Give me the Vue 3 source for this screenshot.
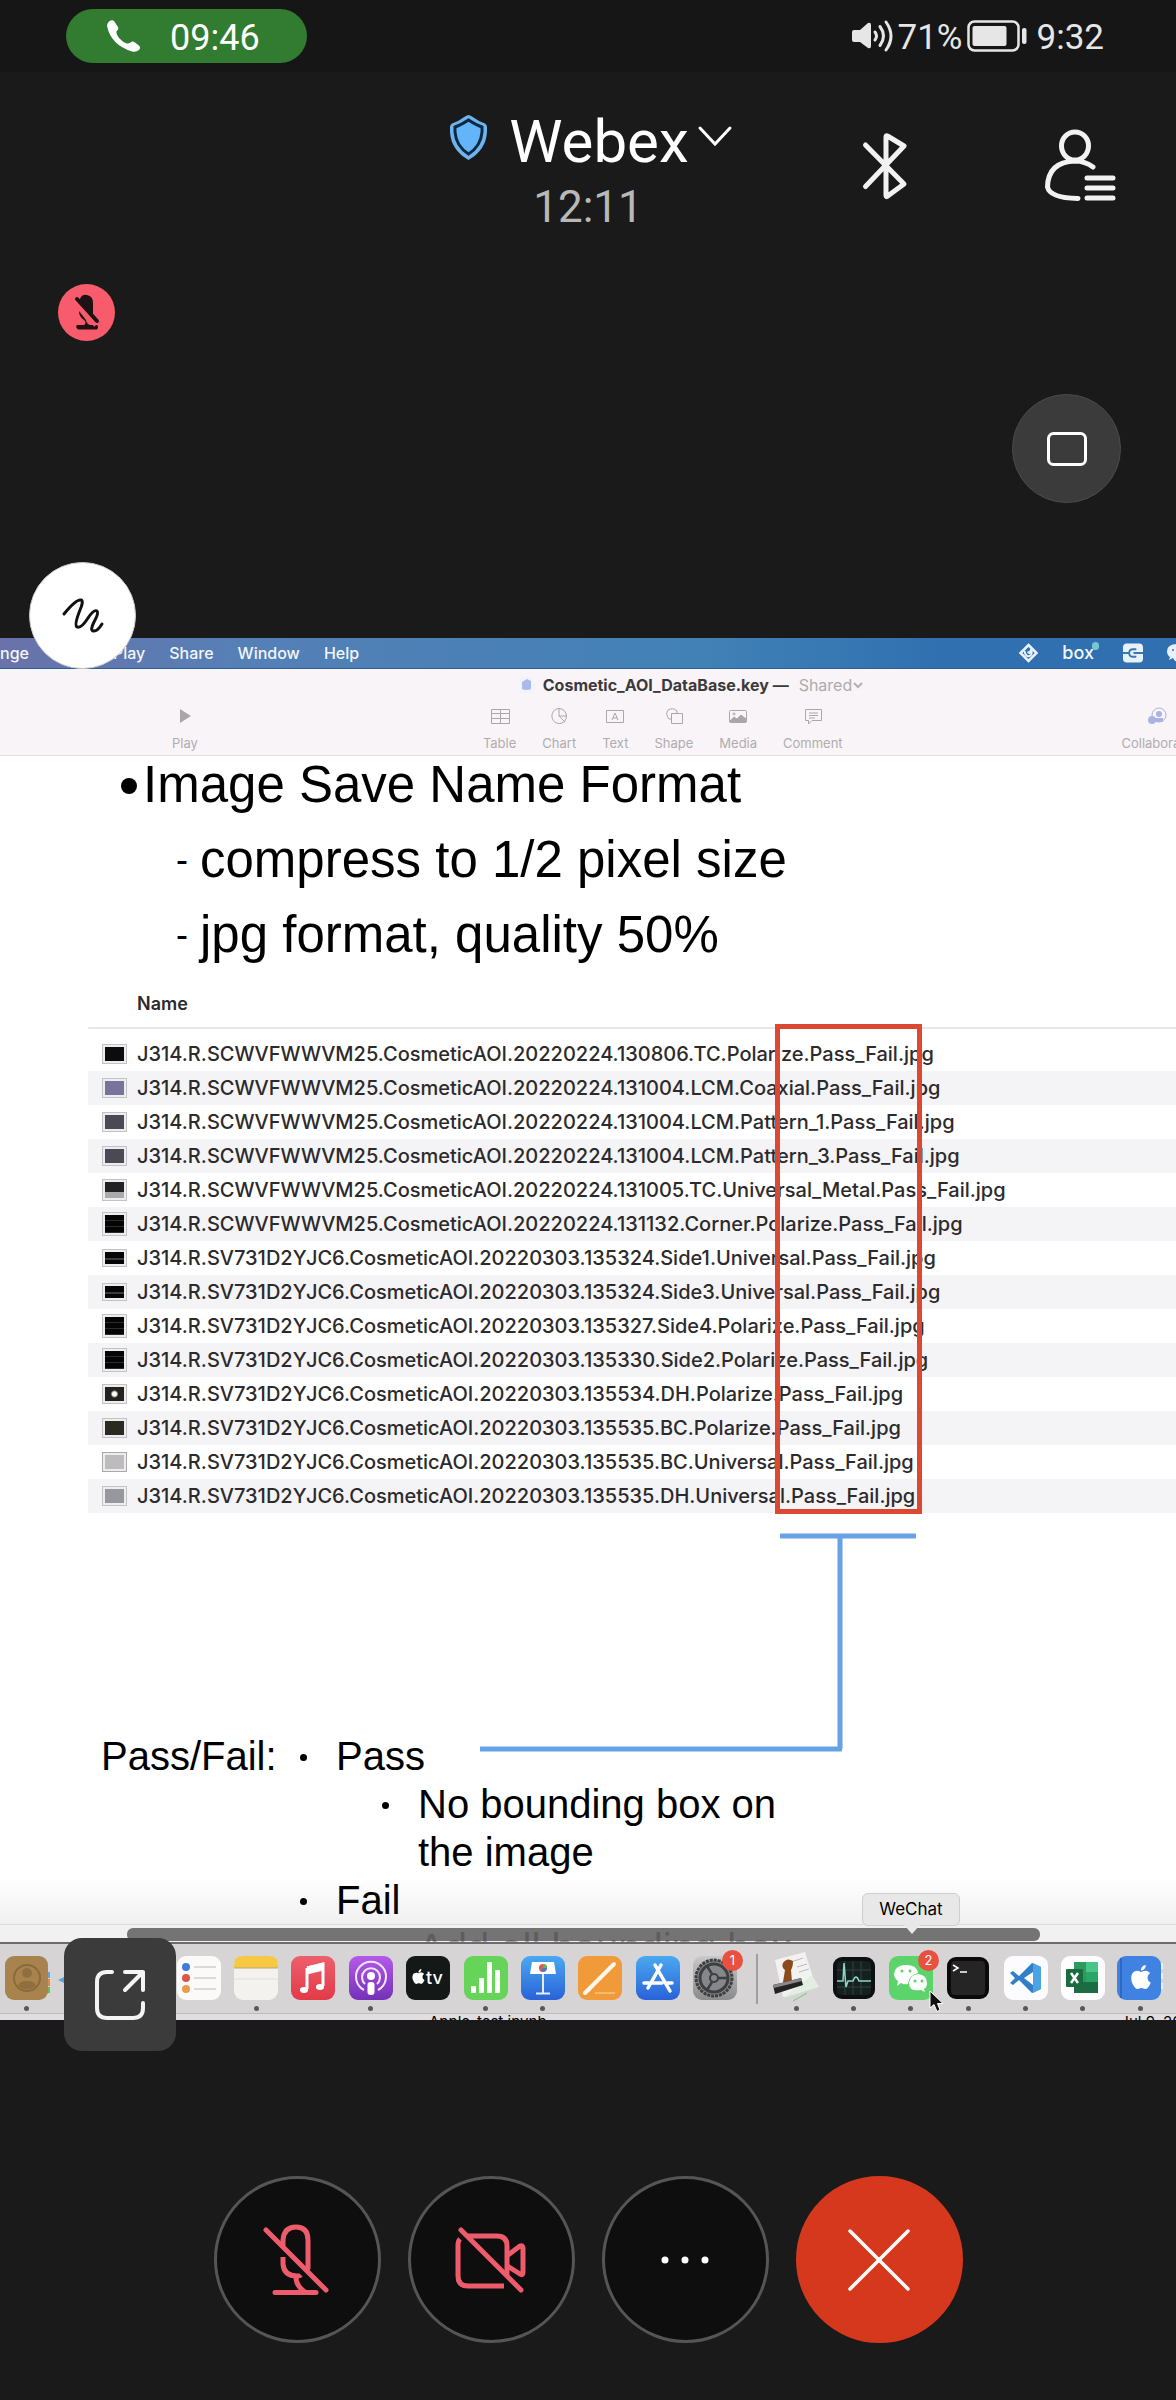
<script setup>
const menus = ['Share', 'Window', 'Help']

const tools = ['Table', 'Chart', 'Text', 'Shape', 'Media', 'Comment']

const files = [
  { name: 'J314.R.SCWVFWWVM25.CosmeticAOI.20220224.130806.TC.Polarize.Pass_Fail.jpg', thumb: 'black' },
  { name: 'J314.R.SCWVFWWVM25.CosmeticAOI.20220224.131004.LCM.Coaxial.Pass_Fail.jpg', thumb: 'violet' },
  { name: 'J314.R.SCWVFWWVM25.CosmeticAOI.20220224.131004.LCM.Pattern_1.Pass_Fail.jpg', thumb: 'slate' },
  { name: 'J314.R.SCWVFWWVM25.CosmeticAOI.20220224.131004.LCM.Pattern_3.Pass_Fail.jpg', thumb: 'slate' },
  { name: 'J314.R.SCWVFWWVM25.CosmeticAOI.20220224.131005.TC.Universal_Metal.Pass_Fail.jpg', thumb: 'metal' },
  { name: 'J314.R.SCWVFWWVM25.CosmeticAOI.20220224.131132.Corner.Polarize.Pass_Fail.jpg', thumb: 'corner' },
  { name: 'J314.R.SV731D2YJC6.CosmeticAOI.20220303.135324.Side1.Universal.Pass_Fail.jpg', thumb: 'strip' },
  { name: 'J314.R.SV731D2YJC6.CosmeticAOI.20220303.135324.Side3.Universal.Pass_Fail.jpg', thumb: 'strip' },
  { name: 'J314.R.SV731D2YJC6.CosmeticAOI.20220303.135327.Side4.Polarize.Pass_Fail.jpg', thumb: 'corner' },
  { name: 'J314.R.SV731D2YJC6.CosmeticAOI.20220303.135330.Side2.Polarize.Pass_Fail.jpg', thumb: 'corner' },
  { name: 'J314.R.SV731D2YJC6.CosmeticAOI.20220303.135534.DH.Polarize.Pass_Fail.jpg', thumb: 'spot' },
  { name: 'J314.R.SV731D2YJC6.CosmeticAOI.20220303.135535.BC.Polarize.Pass_Fail.jpg', thumb: 'olive' },
  { name: 'J314.R.SV731D2YJC6.CosmeticAOI.20220303.135535.BC.Universal.Pass_Fail.jpg', thumb: 'light' },
  { name: 'J314.R.SV731D2YJC6.CosmeticAOI.20220303.135535.DH.Universal.Pass_Fail.jpg', thumb: 'grey' },
]

const dockGroups = [
  {
    key: 'apps',
    items: [
      { id: 'contacts', running: true },
      { id: 'calendar' },
      { id: 'photos' },
      { id: 'reminders' },
      { id: 'notes', running: true },
      { id: 'music' },
      { id: 'podcasts', running: true },
      { id: 'tv' },
      { id: 'numbers', running: true },
      { id: 'keynote', running: true },
      { id: 'pages' },
      { id: 'appstore' },
      { id: 'settings', badge: 1 },
    ],
  },
  {
    key: 'recent',
    items: [
      { id: 'preview', running: true },
      { id: 'activity', running: true },
      { id: 'wechat', running: true, badge: 2, tip: 'WeChat' },
      { id: 'terminal', running: true },
      { id: 'vscode', running: true },
      { id: 'excel', running: true },
      { id: 'apple', running: true },
    ],
  },
]

const applePath =
  'M12.152 6.896c-.948 0-2.415-1.078-3.96-1.04-2.04.027-3.91 1.183-4.961 3.014-2.117 3.675-.546 9.103 1.519 12.09 1.013 1.454 2.208 3.09 3.792 3.039 1.52-.065 2.09-.987 3.935-.987 1.831 0 2.35.987 3.96.948 1.637-.026 2.676-1.48 3.676-2.948 1.156-1.688 1.636-3.325 1.662-3.415-.039-.013-3.182-1.221-3.22-4.857-.026-3.04 2.48-4.494 2.597-4.559-1.429-2.09-3.623-2.324-4.39-2.376-2-.156-3.675 1.09-4.61 1.09zM15.53 3.83c.843-1.012 1.4-2.427 1.245-3.83-1.207.052-2.662.805-3.532 1.818-.78.896-1.454 2.338-1.273 3.714 1.338.104 2.715-.688 3.559-1.701'
</script>

<template>
  <main class="call">
    <header class="status">
      <div class="pill">
        <svg width="34" height="32" viewBox="0 0 34 32"><path fill="#fff" d="M0 6Q0 3 2 1.500Q5-.5 7 1L11 7Q12 9 9.500 11.500Q9 14 12 18Q16 22.500 20 23.500Q22 24 25 21.500Q26 21 28 22.500L32.500 26Q34 28 32 30Q29 32.500 25 31.500Q4 25 0 6Z" /></svg>
        <span>09:46</span>
      </div>
      <div class="status-right">
        <svg width="42" height="32" viewBox="0 0 42 32">
          <path fill="#e6e6e6" d="M2 10H8L16 3Q19 2 19 5V26Q19 29 16 28L8 22H2Q0 22 0 20V12Q0 10 2 10Z" />
          <g fill="none" stroke="#e6e6e6" stroke-width="3" stroke-linecap="round">
            <path d="M23 12Q26 16 23 20" /><path d="M28 6.500Q35 16 28 25.500" /><path d="M34 2Q44 16 34 30" />
          </g>
        </svg>
        <span>71%</span>
        <svg class="battery" width="60" height="32" viewBox="0 0 60 32">
          <rect x="1.500" y="1.500" width="50" height="29" rx="6" fill="none" stroke="#e6e6e6" stroke-width="2.500" />
          <rect x="5.500" y="6" width="34" height="20" rx="2" fill="#e6e6e6" />
          <rect x="55" y="8" width="4.500" height="16" rx="2" fill="#e6e6e6" />
        </svg>
        <span>9:32</span>
      </div>
    </header>

    <section class="head">
      <div class="title-block">
        <button class="title" aria-label="Webex meeting details">
          <svg class="shield" width="37" height="45" viewBox="0 0 37 45">
            <path fill="#6fb4ee" d="M18.500 0Q20 0 22 1.500Q28 6 35 8.500Q37 9.500 37 12V17Q36 35 18.500 45Q1 35 0 17V12Q0 9.500 2 8.500Q9 6 15 1.500Q17 0 18.500 0Z" />
            <path fill="#64b4fa" stroke="#0a2a44" stroke-width="3" d="M18.500 5Q26 10 32 12V17Q31 31 18.500 39Q6 31 5 17V12Q11 10 18.500 5Z" />
          </svg>
          <span>Webex</span>
          <svg class="chev" width="34" height="22" viewBox="0 0 34 22"><path d="M2 2L17 18L32 2" fill="none" stroke="#fff" stroke-width="3" stroke-linecap="round" /></svg>
        </button>
        <div class="timer">12:11</div>
      </div>
      <div class="head-actions">
        <button aria-label="Bluetooth audio">
          <svg width="44" height="66" viewBox="0 0 44 66"><path d="M2.500 12L41 51L24 63.500Q23 64 23 62V4Q23 2 24.500 3L41 13L2.500 53.500" fill="none" stroke="#f2f2f2" stroke-width="5" stroke-linecap="round" stroke-linejoin="round" /></svg>
        </button>
        <button aria-label="Participants">
          <svg width="71" height="72" viewBox="0 0 71 72"><g fill="none" stroke="#f2f2f2" stroke-width="5" stroke-linecap="round">
            <ellipse cx="30" cy="16" rx="13.500" ry="14" />
            <path d="M48 37Q40 31 30 31Q3 32 2.500 57Q5 68 33 68.500" />
            <path d="M42 48H68M42 58H68M42 68H68" />
          </g></svg>
        </button>
      </div>
    </section>

    <section class="side">
      <span class="muted" role="img" aria-label="Muted">
        <svg width="24" height="36" viewBox="0 0 24 36">
          <path fill="#1f1214" d="M5 4Q7-1 12 0Q18 1 18 8V22L4 5Z" />
          <path fill="#1f1214" d="M4 16L11 25Q12 30 16 30H22Q24 32 22 34.500H3Q0 32 2 30H9Q12 28 9 25Q4 22 4 16Z" />
          <path stroke="#f85b6b" stroke-width="2" d="M2 9L20 31" />
          <path stroke="#1f1214" stroke-width="4" stroke-linecap="round" d="M2 4L22 26" />
        </svg>
      </span>
      <button class="layout" aria-label="Change layout">
        <svg width="40" height="34" viewBox="0 0 40 34"><rect x="1.500" y="1.500" width="37" height="31" rx="5" fill="none" stroke="#fff" stroke-width="3" /></svg>
      </button>
    </section>

    <section class="share">
      <div class="screen">
        <nav class="menubar">
          <span class="menu-cut">nge</span>
          <span class="menu-play">Play</span>
          <span v-for="m in menus" :key="m">{{ m }}</span>
          <div class="tray">
            <svg width="19" height="20" viewBox="0 0 18 20"><g fill="none" stroke="#eaf3fb" stroke-width="2.500"><path d="M9 2L17 10L9 18L1 10Z" /><path d="M5 8Q6 14 10 13Q13 12 12 7M8 9L10 10L12 6" stroke-width="2" /></g></svg>
            <span class="box">box<i></i></span>
            <svg width="20" height="20" viewBox="0 0 21 20"><rect width="21" height="20" rx="4" fill="#e8f1fa" /><path d="M14 6H10.500Q6.500 6 6.500 10T10.500 14H14M0 10H6M11 10H21" fill="none" stroke="#3a76b4" stroke-width="2" /></svg>
            <svg width="9" height="20" viewBox="0 0 9 20"><path fill="#e8f1fa" d="M9 1Q0 2 0 8Q0 12 3 14L2 17L6 15Q8 19 9 18Z" /><circle cx="6" cy="7" r="1" fill="#3a76b4" /></svg>
          </div>
        </nav>

        <div class="toolbar">
          <div class="doc-title">
            <svg width="14" height="17" viewBox="0 0 14 17"><rect width="14" height="17" rx="1" fill="#f3f3fb" /><path fill="#a9bbe6" d="M2 5L7 2L11 4V12Q6 14 2 12Z" /></svg>
            <strong>Cosmetic_AOI_DataBase.key —</strong>
            <span>Shared</span>
            <svg width="12" height="8" viewBox="0 0 12 8"><path d="M2 2L6 6L10 2" fill="none" stroke="#b3b0b2" stroke-width="2" /></svg>
          </div>
          <div class="tools">
            <button class="tool">
              <svg width="20" height="20" viewBox="0 0 20 20"><path d="M5 3L16 10L5 17Z" fill="#aaa7a9" /></svg>
              Play
            </button>
            <div class="tool-group">
              <button v-for="t in tools" :key="t" class="tool">
                <svg width="20" height="20" viewBox="0 0 20 20"><g fill="none" stroke="#aaa7a9" stroke-width="1">
                  <path v-if="t === 'Table'" d="M1.500 3.500H19.500V17.500H1.500ZM1.500 7.500H19.500M1.500 12.500H19.500M10.500 3.500V17.500" />
                  <path v-else-if="t === 'Chart'" d="M10 10V2.500A7.500 7.500 0 1 0 15.500 15.500L10 10H17.500A7.500 7.500 0 0 0 10 2.500M17.500 10Q17.500 13 15.500 15.500" />
                  <path v-else-if="t === 'Text'" d="M1.500 4.500H18.500V16.500H1.500ZM7 14L10 7L13 14M8 12H12" />
                  <path v-else-if="t === 'Shape'" d="M7.500 7.500H18.500V17.500H7.500ZM7 13H5Q1 8 4 4Q9 1 13 5V7" />
                  <template v-else-if="t === 'Media'"><rect x="1.500" y="4.500" width="17" height="12" rx="1" /><path fill="#aaa7a9" d="M2 15L6 11L9 13L13 9L18 13V16H2Z" /><circle cx="6" cy="8" r="1" /></template>
                  <path v-else d="M2.500 3.500H18.500V14.500H9L5.500 18V14.500H2.500ZM6 7H15M6 9.500H15M6 12H12" />
                </g></svg>
                {{ t }}
              </button>
            </div>
            <button class="tool collab">
              <svg width="20" height="20" viewBox="0 0 20 20"><circle cx="12" cy="9" r="7" fill="none" stroke="#a9b3e6" /><circle cx="12" cy="8" r="3" fill="#a9b3e6" /><path d="M8 12H16V16H8Z" fill="#a9b3e6" /><circle cx="5" cy="14" r="4" fill="#a9b3e6" /></svg>
              Collaborate
            </button>
          </div>
        </div>

        <article class="slide">
          <div class="outline">
            <div class="o1"><i class="disc"></i>Image Save Name Format</div>
            <div class="o2"><span class="dash">-</span>compress to 1/2 pixel size</div>
            <div class="o2"><span class="dash">-</span>jpg format, quality 50%</div>
          </div>

          <div class="listing">
            <table>
              <thead>
                <tr><th scope="col">Name</th></tr>
              </thead>
              <tbody>
                <tr v-for="f in files" :key="f.name">
                  <td><div class="cell"><i class="thumb" :class="f.thumb"></i>{{ f.name }}</div></td>
                </tr>
              </tbody>
            </table>
            <div class="mark"></div>
            <svg class="link" width="440" height="222" viewBox="0 0 440 222">
              <path d="M300 3H436M360 3V216M0 216H362" fill="none" stroke="#65a2e6" stroke-width="5" />
            </svg>
          </div>

          <div class="verdict">
            <div class="label">Pass/Fail:</div>
            <ul>
              <li>Pass
                <ul><li>No bounding box on the image</li></ul>
              </li>
              <li>Fail
                <ul><li>Add all bounding box</li></ul>
              </li>
            </ul>
          </div>
          <div class="fade"></div>
          <div class="shelf"><div class="scrollbar"></div></div>
        </article>

        <div class="dock">
          <div v-for="g in dockGroups" :key="g.key" class="dock-group" :class="g.key">
            <div v-for="a in g.items" :key="a.id" class="app">
              <svg width="46" height="46" viewBox="0 0 46 46">
                <defs>
                  <linearGradient id="gPurple" x2="0" y2="1"><stop stop-color="#b45be8" /><stop offset="1" stop-color="#7431b8" /></linearGradient>
                  <linearGradient id="gBlue" x2="0" y2="1"><stop stop-color="#4aa9f0" /><stop offset="1" stop-color="#2a62d8" /></linearGradient>
                  <linearGradient id="gRed" x2="0" y2="1"><stop stop-color="#ee5f6c" /><stop offset="1" stop-color="#e23a48" /></linearGradient>
                  <linearGradient id="gGrey" x2="0" y2="1"><stop stop-color="#c9c9c9" /><stop offset="1" stop-color="#8b8b8b" /></linearGradient>
                </defs>
                <g v-if="a.id === 'contacts'">
                  <path d="M42 17h4v6h-4z" fill="#5aa9e0" /><path d="M42 24h4v7h-4z" fill="#e8883c" /><path d="M42 32h4v6h-4z" fill="#62c05a" />
                  <rect x="1" y="1" width="43" height="44" rx="9" fill="#a9834e" /><g fill="none" stroke="#8a6a3c" stroke-width="2"><circle cx="23" cy="23" r="13" /></g><circle cx="23" cy="18" r="5" fill="#8f6f40" /><path d="M14 31Q15 26 23 26T32 31Q23 38 14 31" fill="#8f6f40" />
                </g>
                <g v-else-if="a.id === 'calendar'"><path d="M-3 25l6-3v6z" fill="#4fa8e6" /></g>
                <g v-else-if="a.id === 'reminders'">
                  <rect x="1" y="1" width="44" height="44" rx="9" fill="#fbfaf8" /><circle cx="10" cy="12" r="4" fill="#3e7be0" /><circle cx="10" cy="23" r="4" fill="#dc5548" /><circle cx="10" cy="34" r="4" fill="#ea9a4c" /><path d="M18 12H40M18 23H40M18 34H40" stroke="#cfcfcf" stroke-width="1.500" />
                </g>
                <g v-else-if="a.id === 'notes'">
                  <rect x="1" y="1" width="44" height="44" rx="9" fill="#f4f2ee" /><path d="M1 13V10Q1 1 10 1H36Q45 1 45 10V13Z" fill="#f6c844" /><path d="M1 13H45" stroke="#b9a77a" /><path d="M1 24H45" stroke="#e2dfda" />
                </g>
                <g v-else-if="a.id === 'music'">
                  <rect x="1" y="1" width="44" height="44" rx="9" fill="url(#gRed)" /><path d="M17 13L33 9V31M17 13V34M17 18L33 14" fill="none" stroke="#fff" stroke-width="3" /><path d="M17 11.500L33 8V14L17 17.500Z" fill="#fff" /><ellipse cx="14" cy="35" rx="4" ry="3" fill="#fff" /><ellipse cx="30" cy="32" rx="4" ry="3" fill="#fff" />
                </g>
                <g v-else-if="a.id === 'podcasts'">
                  <rect x="1" y="1" width="44" height="44" rx="9" fill="url(#gPurple)" /><g fill="none" stroke="#f4e6ff" stroke-width="2"><path d="M16 35A15 15 0 1 1 30 35" /><path d="M17 29A9 9 0 1 1 29 29" /></g><circle cx="23" cy="21" r="4" fill="#fff" /><rect x="19.500" y="27" width="7" height="13" rx="3" fill="#fff" />
                </g>
                <g v-else-if="a.id === 'tv'">
                  <rect x="1" y="1" width="44" height="44" rx="9" fill="#141817" /><g transform="translate(6 14) scale(.62)"><path :d="applePath" fill="#fff" /></g><text x="21" y="29" font-family="Inter, sans-serif" font-size="18" font-weight="500" fill="#fff">tv</text>
                </g>
                <g v-else-if="a.id === 'numbers'">
                  <rect x="1" y="1" width="44" height="44" rx="9" fill="#66d458" /><g fill="#fff"><rect x="8" y="31" width="5" height="7" rx="1" /><rect x="16" y="23" width="5" height="15" rx="1" /><rect x="24" y="7" width="5" height="31" rx="1" /><rect x="32" y="15" width="5" height="23" rx="1" /></g>
                </g>
                <g v-else-if="a.id === 'keynote'">
                  <rect x="1" y="1" width="44" height="44" rx="9" fill="url(#gBlue)" /><path d="M12 7H34L36 19H10Z" fill="#fff" /><path d="M23 19V38M16 38.500H30" stroke="#e3eefc" stroke-width="2" /><circle cx="23" cy="13" r="4" fill="#e0584e" /><path d="M23 13V9A4 4 0 0 1 27 13Z" fill="#58b85c" /><path d="M23 13H27A4 4 0 0 1 21 16Z" fill="#3e7be0" />
                </g>
                <g v-else-if="a.id === 'pages'">
                  <rect x="1" y="1" width="44" height="44" rx="9" fill="#f09a3a" /><path d="M8 38L37 9" stroke="#fff7ea" stroke-width="4" stroke-linecap="round" /><path d="M8 38L13 35" stroke="#fff" stroke-width="2" /><path d="M18 38H38" stroke="#fbd9ab" />
                </g>
                <g v-else-if="a.id === 'appstore'">
                  <rect x="1" y="1" width="44" height="44" rx="9" fill="url(#gBlue)" /><path d="M20 10L35 36M26 10L13 33M9 28H27M32 28H37" stroke="#fff" stroke-width="3.500" stroke-linecap="round" />
                </g>
                <g v-else-if="a.id === 'settings'">
                  <rect x="1" y="1" width="44" height="44" rx="9" fill="url(#gGrey)" /><circle cx="22" cy="23" r="18" fill="#85878a" /><g fill="none" stroke="#3d3f41"><circle cx="22" cy="23" r="18" stroke-width="3" stroke-dasharray="3 1" /><circle cx="22" cy="23" r="14" stroke-width="3" /><circle cx="22" cy="23" r="4" stroke-width="2" /><path d="M26 23H36M20 19L15 11M20 27L15 35" stroke-width="2.500" /></g>
                </g>
                <g v-else-if="a.id === 'preview'">
                  <path d="M2 5L32-3L43 32L10 42Z" fill="#f2f2f0" /><path d="M10 43L46 32L39 20Z" fill="#e2efe0" /><path d="M12 9L30 3M24 12L34 9M26 17L36 14" stroke="#b8bcc0" /><path d="M10 8Q14 2 20 6Q20 12 18 15L19 27H10L12 15Q8 12 10 8Z" fill="#8a4a1c" /><path d="M0 30L28 23L30 30L2 39Z" fill="#232323" /><path d="M0 30L28 23L29 26L1 33Z" fill="#88888b" /><path d="M20 46L34 38" stroke="#7ec87a" />
                </g>
                <g v-else-if="a.id === 'activity'">
                  <rect x="2" y="2" width="42" height="42" rx="9" fill="#0d1012" /><rect x="6" y="6" width="34" height="34" rx="4" fill="#16211f" /><path d="M14 6V40M22 6V40M30 6V40M6 15H40M6 32H40" stroke="#2c4440" /><path d="M6 26H12L13 8L15 32L17 26H22Q25 18 28 26H40" fill="none" stroke="#8ed6c6" stroke-width="1.500" />
                </g>
                <g v-else-if="a.id === 'wechat'">
                  <rect x="1" y="1" width="44" height="44" rx="9" fill="#5dd36c" /><path d="M18 10Q29 10 30 18Q21 20 20 29Q16 30 13 28L9 31L10 26Q6 23 6 19Q7 10 18 10Z" fill="#fff" /><path d="M30 19Q39 20 39 28Q39 32 36 34L37 37L33 35Q21 37 21 28Q22 20 30 19Z" fill="#fff" /><g fill="#5dd36c"><circle cx="14" cy="16" r="1.500" /><circle cx="22" cy="16" r="1.500" /><circle cx="27" cy="26" r="1.500" /><circle cx="34" cy="26" r="1.500" /></g>
                </g>
                <g v-else-if="a.id === 'terminal'">
                  <rect x="2" y="2" width="42" height="42" rx="9" fill="#0a0a0a" /><rect x="6" y="6" width="34" height="34" rx="4" fill="#252525" /><path d="M8 10L13 13L8 16M15 17H22" fill="none" stroke="#fff" stroke-width="1.500" />
                </g>
                <g v-else-if="a.id === 'vscode'">
                  <rect x="1" y="1" width="44" height="44" rx="9" fill="#fcfcfe" /><path d="M29 8L38 12V34L29 38L16 25L10 30L7 28L12 23L7 18L10 16L16 21ZM30 17L21 23L30 30Z" fill="#2f80c8" fill-rule="evenodd" /><path d="M30 8L38 12V34L30 38Z" fill="#4ba3e3" />
                </g>
                <g v-else-if="a.id === 'excel'">
                  <rect x="1" y="1" width="44" height="44" rx="9" fill="#fcfdfc" /><path d="M14 7H38V38H14Z" fill="#2f9a60" /><path d="M26 7H38V17H26Z" fill="#48c587" /><path d="M14 27H38V38H14Z" fill="#1d6b42" /><path d="M26 17H38V27H26Z" fill="#2ba669" /><rect x="6" y="14" width="17" height="18" rx="1" fill="#1a6b3e" /><path d="M11 18L18 28M18 18L11 28" stroke="#fff" stroke-width="2.500" />
                </g>
                <g v-else-if="a.id === 'apple'">
                  <path d="M43 8h3v6h-3zM43 18h3v6h-3zM43 28h3v6h-3z" fill="#e8f0fa" /><rect x="0" y="1" width="44" height="44" rx="9" fill="#3f82e2" /><path d="M4 3V43" stroke="#2e68c4" stroke-width="2" /><g transform="translate(12 10)"><path :d="applePath" fill="#fff" /></g>
                </g>
              </svg>
              <b v-if="a.badge" class="badge">{{ a.badge }}</b>
              <span v-if="a.tip" class="tip">{{ a.tip }}</span>
              <svg v-if="a.tip" class="cursor" width="15" height="23" viewBox="0 0 15 23"><path d="M1 1V18L5 14.500L8 21.500L11 20L8.500 13.500H14Z" fill="#111" stroke="#fff" stroke-width="1" /></svg>
              <i class="dot" :class="{ on: a.running }"></i>
            </div>
          </div>
        </div>
        <div class="peek"><span>Apple_test.ipynb</span><span>Jul 9, 2022</span></div>
      </div>

      <button class="fab annotate" aria-label="Annotate">
        <svg width="42" height="36" viewBox="0 0 42 36"><path d="M2 16Q14 1 19 2Q22 3 18 12Q12 27 15 29Q19 31 26 20Q32 11 35 13Q37 15 32 24Q28 32 31 33Q35 34 40 26" fill="none" stroke="#111" stroke-width="3" stroke-linecap="round" /></svg>
      </button>
      <button class="fab expand" aria-label="Open in full screen">
        <svg width="52" height="52" viewBox="0 0 52 52"><path d="M18 3H13Q3 3 3 13V39Q3 49 13 49H39Q49 49 49 39V34M31 3H49V21M49 3L31 21" fill="none" stroke="#f4f4f4" stroke-width="4" stroke-linecap="round" stroke-linejoin="round" /></svg>
      </button>
    </section>

    <footer class="controls">
      <button aria-label="Unmute">
        <svg width="68" height="72" viewBox="0 0 68 72"><g fill="none" stroke="#ee5c6c" stroke-width="5" stroke-linecap="round">
          <path d="M3 6L63 66" /><path d="M20 22V16Q21 3 33 3T45 16V44" /><path stroke-linecap="butt" d="M20 33V40Q21 52 34 52Q37 52 38 51" /><path stroke-linecap="butt" d="M33 53Q33 62 42 68" /><path d="M12 68.500H53" />
        </g></svg>
      </button>
      <button aria-label="Start video">
        <svg width="72" height="68" viewBox="0 0 72 68"><g fill="none" stroke="#ee5c6c" stroke-width="5" stroke-linecap="round">
          <path d="M6 4L66 64" /><path stroke-linecap="butt" d="M13 10H42Q52 10 52 20V49" /><path stroke-linecap="butt" d="M5 13Q3 15 3 18V50Q3 60 13 60H49" /><path d="M53 29L65 20Q68 19 68 22V46Q68 50 65 48L54 41" />
        </g></svg>
      </button>
      <button aria-label="More options">
        <svg width="50" height="10" viewBox="0 0 50 10"><g fill="#fff"><circle cx="5" cy="5" r="3.500" /><circle cx="25" cy="5" r="3.500" /><circle cx="45" cy="5" r="3.500" /></g></svg>
      </button>
      <button class="leave" aria-label="Leave meeting">
        <svg width="62" height="62" viewBox="0 0 62 62"><path d="M2 2L60 60M60 2L2 60" stroke="#fff" stroke-width="3.500" stroke-linecap="round" /></svg>
      </button>
    </footer>
  </main>
</template>

<style>
body { background: #1a1a1a; }
</style>

<style scoped>
* { box-sizing: border-box; }
button { border: 0; padding: 0; margin: 0; background: none; color: inherit; font: inherit; }
svg { display: block; flex: none; overflow: visible; }
.call { min-height: 100vh; display: flex; flex-direction: column; background: #1a1a1a; color: #fff; font-family: Roboto, sans-serif; }

.status { height: 72px; background: #161616; display: flex; align-items: center; justify-content: space-between; padding: 0 72px 0 66px; font-size: 36px; }
.status span { padding-top: 3px; }
.pill { height: 54px; padding: 0 47px 0 41px; border-radius: 27px; background: #317c30; display: flex; align-items: center; gap: 29px; }
.status-right { display: flex; align-items: center; color: #e6e6e6; gap: 4px; font-size: 35px; }
.battery { margin-right: 6px; }

.head { display: grid; grid-template-columns: 1fr auto 1fr; height: 168px; }
.title-block { grid-column: 2; padding-top: 32px; text-align: center; }
.title { display: flex; align-items: center; font-size: 60px; line-height: 76px; padding-left: 6px; }
.shield { margin: 0 22px 10px 0; }
.chev { margin: 0 0 10px 9px; }
.timer { margin-top: -3px; font-size: 44px; line-height: 60px; color: #b8b8b8; }
.head-actions { display: flex; justify-content: flex-end; align-items: center; gap: 138px; height: 72px; margin: 58px 60px 0 0; }

.side { height: 398px; display: flex; justify-content: space-between; padding: 44px 55px 0 58px; }
.muted { width: 57px; height: 57px; border-radius: 50%; background: #f85b6b; display: grid; place-items: center; }
.layout { width: 109px; height: 109px; margin-top: 110px; border-radius: 50%; background: #3b3b3b; border: 1px solid #4a4a4a; display: grid; place-items: center; }

.share { position: relative; }
.screen { overflow: hidden; background: #fff; color: #000; font-family: Inter, sans-serif; }
.menubar { height: 31px; display: flex; align-items: center; gap: 24px; color: #f2f6fb; font-size: 16px; font-weight: 500; background: linear-gradient(90deg, #6a72aa 0, #5580b6 20%, #4181b6 60%, #3070b0 80%, #3070b0); border-bottom: 1px solid #2f5f90; }
.menu-play { margin-left: 60px; }
.tray { margin-left: auto; display: flex; align-items: center; gap: 24px; }
.box { display: flex; font-size: 18px; line-height: 22px; }
.box i { width: 7px; height: 8px; margin-left: -2px; border-radius: 4px; background: #74c8d0; }

.toolbar { height: 87px; background: #f8f4f7; border-bottom: 1px solid #e3dfe2; padding-top: 5px; }
.doc-title { display: flex; align-items: center; justify-content: center; padding-left: 208px; line-height: 22px; font-size: 16px; color: #aeabad; }
.doc-title strong { font-weight: 700; color: #3c3a3c; margin: 0 10px 0 9px; }
.tools { display: flex; margin: 10px 0 0 172px; font-size: 13px; line-height: 18px; color: #b0acaf; }
.tool { display: flex; flex-direction: column; align-items: center; gap: 8px; }
.tool-group { display: flex; gap: 26px; margin-left: 285px; }
.collab { margin-left: auto; margin-right: -16px; }

.slide { position: relative; height: 1188px; overflow: hidden; }
.outline { padding-left: 121px; font-family: "Liberation Sans", Arial, sans-serif; font-size: 51px; line-height: 75px; margin-top: -9px; white-space: nowrap; }
.o1, .o2 { display: flex; align-items: center; }
.disc { width: 16px; height: 16px; margin: 2px 6px 0 0; border-radius: 50%; background: #000; }
.o2 { padding-left: 55px; }
.dash { width: 24px; font-size: 36px; }

.listing { position: relative; margin: 7px 0 0 88px; }
table { width: 100%; border-collapse: collapse; font-size: 20px; font-weight: 500; color: #2c2a2c; white-space: nowrap; }
th { height: 49px; padding: 0 0 0 49px; text-align: left; font-weight: 600; font-size: 18px; border-bottom: 2px solid #eae6e9; }
tbody::before { content: ""; display: block; height: 8px; }
td { height: 34px; padding: 0; }
tbody tr:nth-child(even) { background: #f4f3f5; }
.cell { display: flex; align-items: center; gap: 10px; padding-left: 14px; line-height: 34px; }
.thumb { width: 25px; height: 20px; border: 3px solid #ededf0; outline: 1px solid #c4c2c6; outline-offset: -1px; background: #0c0c0e; }
.violet { background: #77749c; }
.slate { background: #4b4a54; }
.metal { height: 22px; background: linear-gradient(#222 60%, #aaa 60%); }
.corner { height: 24px; background: repeating-linear-gradient(#050505 0 5px, #2c2c2c 5px 6px); }
.strip { height: 18px; background: linear-gradient(#050505 50%, #3a3a3a 50% 70%, #050505 70%); }
.spot { background: radial-gradient(circle, #fff 0 2px, #24231d 4px); }
.olive { background: #2a2a22; }
.light { background: #bdbbbd; outline-color: #aaa; }
.grey { background: #97979f; }
.mark { position: absolute; left: 687px; top: 45px; width: 147px; bottom: -1px; border: 5px solid #dc4832; }
.link { position: absolute; left: 392px; top: 100%; margin-top: 20px; }

.verdict { display: flex; margin: 219px 0 0 101px; font: 40px/48px "Liberation Sans", Arial, sans-serif; }
.label { width: 235px; }
ul { list-style: none; margin: 0; padding: 0; }
li { position: relative; }
li::before { content: ""; position: absolute; left: -36px; top: 22px; width: 7px; height: 7px; border-radius: 50%; background: #000; }
ul ul { padding-left: 82px; width: 480px; }
.fade { position: absolute; left: 0; right: 0; bottom: 20px; height: 48px; background: linear-gradient(transparent, rgba(0, 0, 0, 0.06)); }
.shelf { position: absolute; left: 0; right: 0; bottom: 0; height: 20px; padding: 3px 136px 0 127px; background: rgba(236, 235, 236, 0.7); border-top: 1px solid #dcdcdc; border-bottom: 2px solid #6c6a6c; }
.scrollbar { height: 13px; border-radius: 6px; background: rgba(62, 62, 62, 0.7); }

.dock { display: flex; height: 70px; background: #d7d4d6; border-bottom: 1px solid #bfbcbe; }
.dock-group { display: flex; padding-top: 11px; }
.apps { flex: 745; margin-left: -2px; }
.recent { flex: 401; position: relative; margin: 0 7px 0 24px; }
.recent::before { content: ""; position: absolute; left: -12px; top: 10px; width: 2px; height: 50px; background: #a19ea0; }
.app { position: relative; flex: 1; display: flex; flex-direction: column; align-items: center; }
.dot { width: 5px; height: 5px; margin-top: 5px; border-radius: 50%; }
.dot.on { background: #5a585a; }
.badge { position: absolute; left: 50%; top: -5px; margin-left: 7px; width: 21px; height: 21px; border-radius: 50%; background: #e8503f; color: #fff; font-size: 13px; font-weight: 400; line-height: 21px; text-align: center; }
.tip { position: absolute; left: 50%; bottom: 87px; width: 98px; margin-left: -49px; background: #e9e8e9; border: 1px solid #cfcdcf; border-radius: 6px; font-size: 17px; line-height: 31px; text-align: center; }
.tip::after { content: ""; position: absolute; left: 41px; top: 100%; border: 8px solid transparent; border-top: 9px solid #e9e8e9; border-bottom: 0; }
.cursor { position: absolute; left: 50%; top: 35px; margin-left: 18px; z-index: 1; }
.peek { height: 6px; overflow: hidden; display: flex; justify-content: space-between; padding: 0 0 0 429px; background: #e0dee0; font-size: 15px; line-height: 16px; }
.peek span:last-child { margin-right: -24px; }

.fab { position: absolute; display: grid; place-items: center; }
.annotate { left: 29px; top: -76px; width: 107px; height: 107px; border-radius: 50%; background: #fff; border: 1px solid #ccc; }
.expand { left: 64px; bottom: -31px; width: 112px; height: 113px; border-radius: 18px; background: #3b3b3b; }

.controls { margin-top: auto; padding-bottom: 57px; display: flex; justify-content: center; gap: 27px; }
.controls button { width: 167px; height: 167px; border-radius: 50%; background: #0e0e0e; border: 3px solid #555; display: grid; place-items: center; }
.controls .leave { background: #d5381d; border-color: #d5381d; }
</style>
